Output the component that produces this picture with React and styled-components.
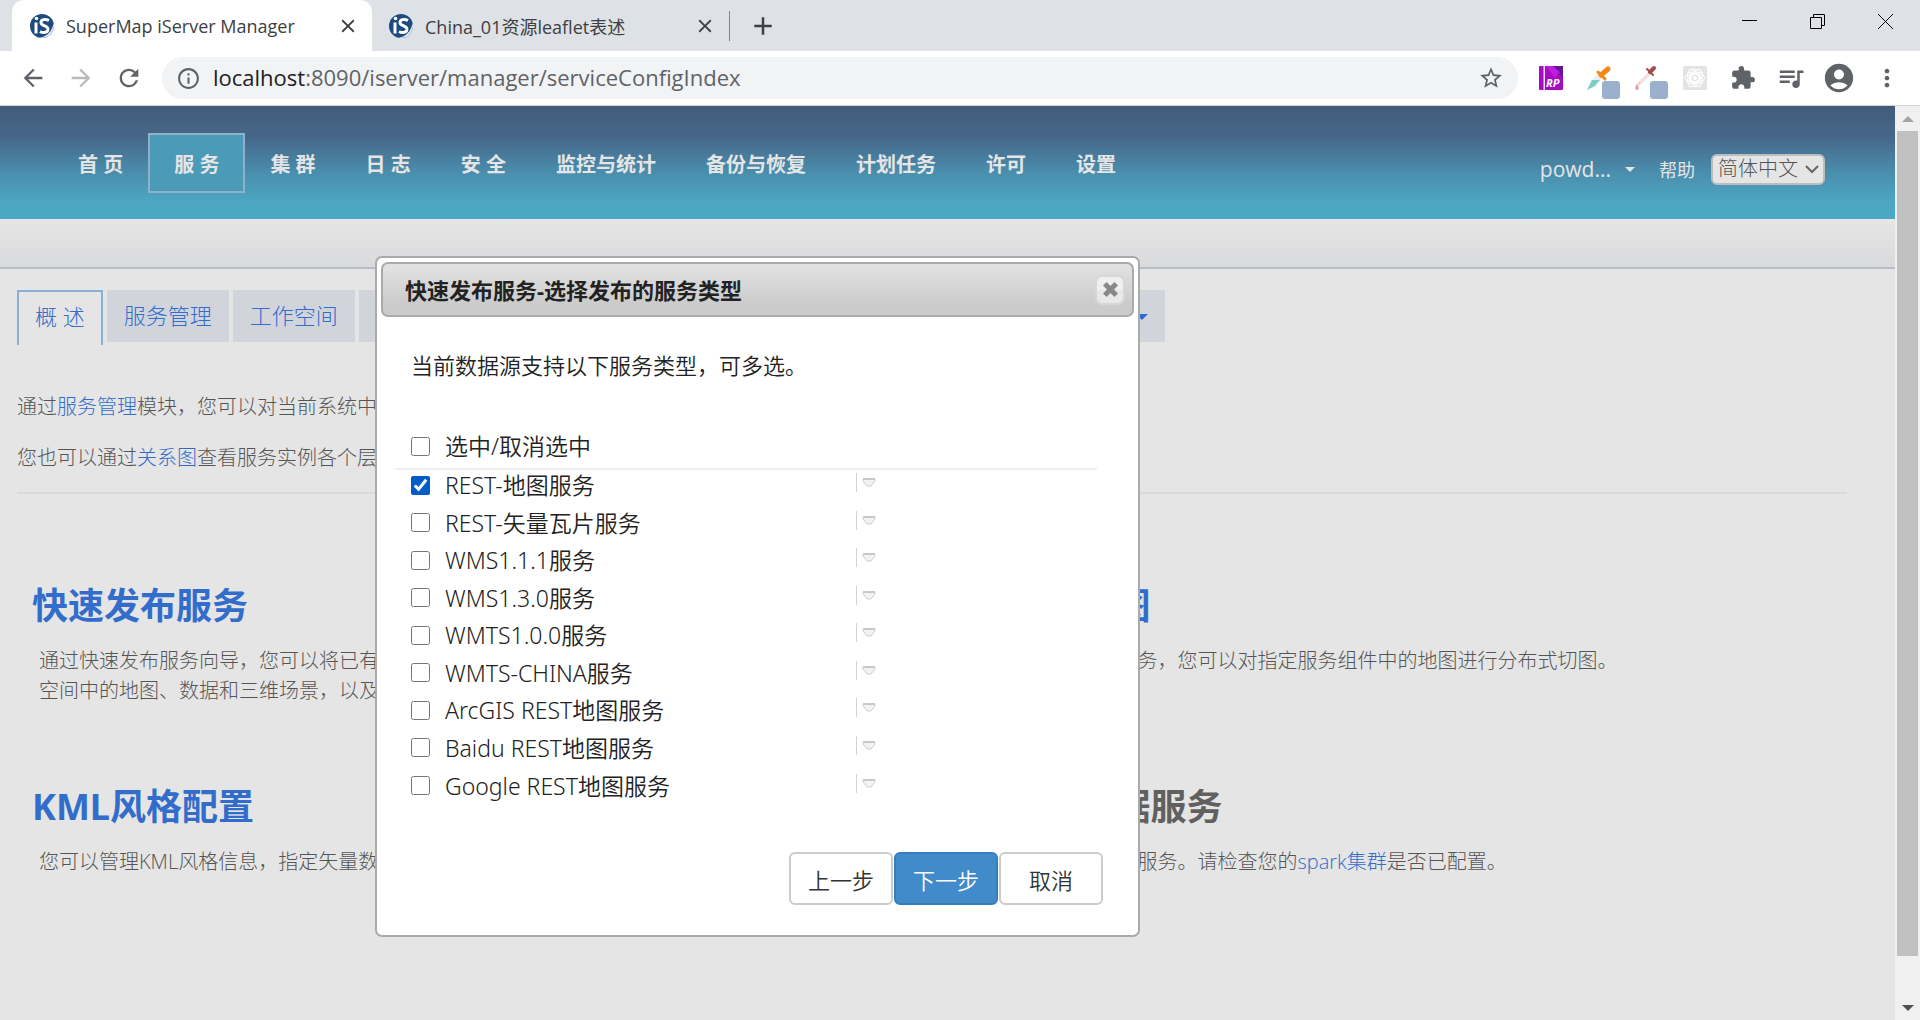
import React, { useState } from 'react';
import styled, { createGlobalStyle } from 'styled-components';
import {
  MdArrowBack, MdArrowForward, MdRefresh, MdInfoOutline, MdStarBorder,
  MdExtension, MdQueueMusic, MdAccountCircle, MdMoreVert, MdClose, MdAdd,
} from 'react-icons/md';

const GlobalStyle = createGlobalStyle`
  * { box-sizing: border-box; }
  body {
    margin: 0;
    font-family: "Open Sans", "Noto Sans CJK SC", sans-serif;
    font-size: 20px;
    color: #555;
    overflow: hidden;
  }
  button, select, input { font: inherit; }
  a { color: #326dcb; text-decoration: none; }
`;

const Window = styled.div`
  display: flex;
  flex-direction: column;
  height: 100vh;
`;

/* ---------- browser frame ---------- */

const TabStrip = styled.div`
  display: flex;
  align-items: center;
  height: 51px;
  flex: none;
  padding-left: 12px;
  background: #dee1e6;
`;

const BrowserTab = styled.div`
  display: flex;
  align-items: center;
  gap: 12px;
  height: 51px;
  width: ${p => (p.$active ? 360 : 357)}px;
  padding: 0 13px 0 ${p => (p.$active ? 18 : 17)}px;
  border-radius: 12px 12px 0 0;
  background: ${p => (p.$active ? '#fff' : 'transparent')};
  color: #3c4043;
  font-size: 18px;
  white-space: nowrap;
`;

const TabTitle = styled.span`
  flex: 1;
`;

const IconButton = styled.button`
  display: flex;
  align-items: center;
  justify-content: center;
  flex: none;
  padding: 0;
  border: 0;
  background: none;
  color: ${p => p.$color || '#5f6368'};
`;

const StripDivider = styled.span`
  width: 1px;
  height: 30px;
  background: #80868b;
  margin-right: 18px;
`;

const WindowControls = styled.div`
  display: flex;
  gap: 53px;
  margin: 0 27px 8px auto;
`;

const Toolbar = styled.div`
  display: flex;
  align-items: center;
  height: 55px;
  flex: none;
  padding: 0 9px 0 19px;
  background: #fff;
  border-bottom: 1px solid #cfd4d8;
`;

const ToolGroup = styled.div`
  display: flex;
  align-items: center;
  gap: 20px;
`;

const AddressBar = styled.div`
  display: flex;
  align-items: center;
  flex: 1;
  height: 42px;
  margin: 0 9px 0 19px;
  padding: 0 14px;
  border-radius: 21px;
  background: #f1f3f4;
  color: #5f6368;
  font-size: 22px;
`;

const Url = styled.span`
  flex: 1;
  margin: 0 0 2px 12px;
  b { font-weight: 400; color: #202124; }
`;

const Extensions = styled.div`
  display: grid;
  grid-auto-flow: column;
  grid-auto-columns: 48px;
  justify-items: center;
  align-items: center;
`;

/* ---------- page ---------- */

const Viewport = styled.div`
  display: flex;
  flex: 1;
  min-height: 0;
`;

const Page = styled.div`
  flex: 1;
  min-width: 0;
  background: #e5e5e5;
  font-weight: 300;
`;

const Header = styled.header`
  display: flex;
  align-items: center;
  height: 113px;
  padding: 0 70px 0 53px;
  background: linear-gradient(#425b7a 0%, #46678a 28%, #4a8fae 60%, #4ca6c2 85%, #4ca9c5 100%);
`;

const Nav = styled.nav`
  display: flex;
  align-items: center;
  flex: 1;
`;

const NavLink = styled.a`
  padding: ${p => (p.$active ? '4px 24px 0' : '4px 25px 0')};
  line-height: 52px;
  border: ${p => (p.$active ? '2px solid #8fb0c6' : '0')};
  background: ${p => (p.$active ? '#4a9ab8' : 'none')};
  color: #e5e5e5;
  font-weight: 700;
  white-space: nowrap;
`;

const UserArea = styled.div`
  display: flex;
  align-items: center;
  padding-top: 13px;
  color: #e5e5e5;
  font-weight: 400;
`;

const UserMenu = styled.button`
  display: flex;
  align-items: center;
  gap: 14px;
  padding: 0;
  border: 0;
  background: none;
  color: #e5e5e5;
  font-size: 21px;
  line-height: 30px;
`;

const HelpLink = styled.a`
  margin: 0 16px 0 24px;
  color: #e5e5e5;
  font-size: 18px;
`;

const LanguageBox = styled.label`
  position: relative;
  display: flex;
  width: 114px;
  font-weight: 300;
  svg {
    position: absolute;
    right: 6px;
    top: 10px;
    pointer-events: none;
  }
`;

const Language = styled.select`
  appearance: none;
  width: 100%;
  height: 31px;
  padding: 0 5px;
  border: 2px solid #bdbdbd;
  border-radius: 6px;
  background: #e5e5e5;
  color: #555;
  line-height: 26px;
`;

const SubHeader = styled.div`
  height: 50px;
  background: linear-gradient(#e6e6e6, #d9dadc);
  border-bottom: 2px solid #b6bdca;
`;

const Tabs = styled.div`
  display: flex;
  align-items: flex-start;
  gap: 4px;
  padding: 21px 17px 0;
`;

const Tab = styled.a`
  display: flex;
  align-items: center;
  gap: 4px;
  height: ${p => (p.$active ? 55 : 52)}px;
  padding: ${p => (p.$active ? '0 16px 7px' : '0 17px 4px')};
  border: solid #87b1d6;
  border-width: ${p => (p.$active ? '2px 2px 0' : '0')};
  background: ${p => (p.$active ? 'none' : '#d1d5db')};
  font-size: 22px;
  white-space: nowrap;
`;

const Caret = styled.span`
  margin-top: ${p => p.$drop || 0}px;
  border: ${p => p.$size}px solid transparent;
  border-top-color: currentColor;
  border-bottom-width: 0;
`;

const Intro = styled.section`
  margin: 36px 48px 0 17px;
  padding-bottom: 9px;
  border-bottom: 2px solid #d9d9d9;
  p {
    margin: 0;
    line-height: 51px;
    white-space: nowrap;
  }
`;

const Features = styled.section`
  display: grid;
  grid-template-columns: 1fr 1fr;
  column-gap: 14px;
  padding: 85px 0 0 32px;
`;

const Feature = styled.article`
  min-height: 201px;
`;

const FeatureTitle = styled.h2`
  margin: 0;
  color: ${p => (p.$disabled ? '#606060' : '#326dcb')};
  font-family: "Noto Sans", "Noto Sans CJK SC", sans-serif;
  font-size: 36px;
  line-height: 54px;
  white-space: nowrap;
`;

const FeatureText = styled.p`
  margin: 13px 0 0;
  padding-left: 7px;
  line-height: 30px;
  white-space: nowrap;
`;

const Scrollbar = styled.div`
  display: flex;
  flex-direction: column;
  align-items: center;
  width: 25px;
  background: #f0f0f0;
`;

const ScrollEnd = styled.span`
  display: flex;
  align-items: center;
  height: 25px;
`;

const Thumb = styled.span`
  width: 21px;
  flex: 1;
  margin-bottom: 39px;
  background: #c0c0c0;
`;

/* ---------- dialog ---------- */

const Dialog = styled.div`
  position: absolute;
  left: 375px;
  top: 256px;
  width: 765px;
  padding: 4px 4px 30px;
  border: 2px solid #aaa;
  border-radius: 7px;
  background: #fff;
  color: #222;
  font-family: "Noto Sans", "Noto Sans CJK SC", sans-serif;
  font-size: 22px;
  font-weight: 350;
`;

const TitleBar = styled.div`
  display: flex;
  align-items: center;
  justify-content: space-between;
  height: 55px;
  padding: 0 7px 0 22px;
  border: 2px solid #aaa;
  border-radius: 7px;
  background: linear-gradient(#e3e3e3, #ccc 75%, #cbcbcb);
`;

const DialogTitle = styled.h1`
  margin: 0;
  font-size: 22px;
  line-height: 32px;
`;

const CloseButton = styled(IconButton)`
  width: 30px;
  height: 30px;
  border: 2px solid #d6d6d6;
  border-radius: 7px;
  background: linear-gradient(#efefef 50%, #e8e8e8 50%);
`;

const Lead = styled.p`
  margin: 31px 0 0 30px;
  line-height: 34px;
`;

const SelectAll = styled.div`
  margin: 48px 37px 0 15px;
  padding-left: 15px;
  padding-bottom: 6px;
  border-bottom: 2px solid #eee;
`;

const ServiceList = styled.ul`
  display: flex;
  flex-direction: column;
  min-height: 338px;
  margin: 0 37px 0 15px;
  padding: 0 0 0 15px;
  list-style: none;
`;

const ServiceRow = styled.li`
  display: flex;
  align-items: flex-start;
  flex: 1;
  label { line-height: 30px; }
`;

const Option = styled.label`
  display: flex;
  align-items: center;
  width: 445px;
  font-size: 23px;
  line-height: 32px;
  white-space: nowrap;
`;

const Checkbox = styled.input`
  width: 19px;
  height: 19px;
  margin: 0 15px 0 0;
  accent-color: #005cc8;
`;

const Expand = styled.button`
  display: flex;
  align-items: center;
  height: 19px;
  margin-top: 3px;
  padding: 0 0 0 5px;
  border: 0;
  border-left: 1px solid #d3d3d3;
  background: none;
`;

const Actions = styled.div`
  display: flex;
  justify-content: flex-end;
  gap: 1px;
  margin: 44px 31px 0 0;
`;

const ActionButton = styled.button`
  width: 104px;
  height: 53px;
  border: 2px solid ${p => (p.$primary ? '#357ebd' : '#ccc')};
  border-radius: 6px;
  background: ${p => (p.$primary ? '#428bca' : '#fff')};
  color: ${p => (p.$primary ? '#fff' : '#333')};
`;

/* ---------- drawings ---------- */

const Favicon = () => (
  <svg width="24" height="24" viewBox="0 0 24 24">
    <circle cx="12" cy="12" r="12" fill="#1d4a80" />
    <path d="M24 12a12 12 0 0 1-14 11.8C17 22 22 18 23.500 9z" fill="#dfe7f0" />
    <circle cx="6.500" cy="4.500" r="1.800" fill="#fff" />
    <path d="M6 8.500v11" stroke="#fff" strokeWidth="3" />
    <path d="M19 6.500c-4-2-8-1-8 2 0 4 7.500 3 7 7-.5 3-4.500 4-8 2" fill="none" stroke="#fff" strokeWidth="3" />
    <path d="M19 10c1 1 2 3 1 6" fill="none" stroke="#1d4a80" strokeWidth="1" />
  </svg>
);

const RpIcon = () => (
  <svg width="24" height="24" viewBox="0 0 24 24">
    <rect width="24" height="24" rx="1" fill="#a80bc4" />
    <path d="M7 0h17v12z" fill="#7a13a8" />
    <path d="M7 0l9 12L24 2V0z" fill="#c41be0" />
    <path d="M14 0h10v9z" fill="#5f1697" />
    <rect x="4.500" width="1.500" height="24" fill="#f3d6f8" />
    <text x="7" y="21" fontSize="11" fontWeight="700" fontStyle="italic" fill="#fff">RP</text>
  </svg>
);

const Dropper = ({ cap, body, tip, thin }) => (
  <svg width="42" height="42" viewBox="0 0 42 42">
    {thin ? (
      <g transform="translate(6 3)">
        <path d="M18 13L7 24" stroke={body} strokeWidth="3" strokeLinecap="round" />
        <path d="M18 13L8 23" stroke="#fff" strokeWidth="1" />
        <path d="M18 12l4-4" stroke={cap} strokeWidth="4" strokeLinecap="round" />
        <path d="M15 9l6 6" stroke={cap} strokeWidth="2" strokeLinecap="round" />
        <path d="M5 24c-2.500 3.500-2 6 0 6s2.500-2.500 0-6z" fill={tip} />
      </g>
    ) : (
      <g transform="translate(6 3)">
        <path d="M15 13L7 21l-4 9 8-4 8-9z" fill={body} />
        <path d="M8 20l-5 10 8-4 5-6z" fill={tip} />
        <path d="M17 15l7-6" stroke={cap} strokeWidth="5" strokeLinecap="round" />
        <path d="M14 12l7 7" stroke={cap} strokeWidth="3" strokeLinecap="round" />
      </g>
    )}
    <rect x="24" y="24" width="18" height="18" rx="3" fill="#9bb0cd" />
  </svg>
);

const ReactBadge = () => (
  <svg width="24" height="24" viewBox="0 0 24 24">
    <rect width="24" height="24" rx="2" fill="#e3e3e3" />
    <g fill="none" stroke="#fff" strokeWidth="1">
      {[0, 60, 120].map(a => (
        <ellipse key={a} cx="12" cy="12" rx="10" ry="4" transform={`rotate(${a} 12 12)`} />
      ))}
      {[30, 90, 150].map(a => (
        <ellipse key={a} cx="12" cy="12" rx="9" ry="4" transform={`rotate(${a} 12 12)`} />
      ))}
    </g>
    <circle cx="12" cy="12" r="2" fill="#fff" />
  </svg>
);

const Glyph = ({ d, size = 15, color = '#000', width = 1 }) => (
  <svg width={size} height={size} viewBox="0 0 15 15">
    <path d={d} fill="none" stroke={color} strokeWidth={width} />
  </svg>
);

const ScrollArrow = ({ up }) => (
  <svg width="12" height="6" viewBox="0 0 12 6">
    <path d={up ? 'M0 6L6 0l6 6z' : 'M0 0l6 6 6-6z'} fill={up ? '#a3a3a3' : '#505050'} />
  </svg>
);

const ExpandArrow = () => (
  <svg width="14" height="9" viewBox="0 0 14 9">
    <path d="M1 1h12v2L9 8H5L1 3z" fill="#f2f2f2" stroke="#d0d0d0" />
    <path d="M1 1h12" stroke="#c8c8c8" strokeWidth="2" />
  </svg>
);

/* ---------- data ---------- */

const navItems = ['首 页', '服 务', '集 群', '日 志', '安 全', '监控与统计', '备份与恢复', '计划任务', '许可', '设置'];
const tabItems = ['概 述', '服务管理', '工作空间', '服务接口', '服务组件', '数据源', '关系图', '元数据', '提供者', '更多操作'];
const services = [
  'REST-地图服务', 'REST-矢量瓦片服务', 'WMS1.1.1服务', 'WMS1.3.0服务', 'WMTS1.0.0服务',
  'WMTS-CHINA服务', 'ArcGIS REST地图服务', 'Baidu REST地图服务', 'Google REST地图服务',
];

export default function App() {
  const [checked, setChecked] = useState({ 0: true });
  const all = services.every((_, i) => checked[i]);
  const toggleAll = () => setChecked(all ? {} : Object.fromEntries(services.map((_, i) => [i, true])));

  return (
    <Window>
      <GlobalStyle />
      <TabStrip>
        <BrowserTab $active>
          <Favicon />
          <TabTitle>SuperMap iServer Manager</TabTitle>
          <IconButton aria-label="关闭标签页" $color="#3c4043"><MdClose size={22} /></IconButton>
        </BrowserTab>
        <BrowserTab>
          <Favicon />
          <TabTitle>China_01资源leaflet表述</TabTitle>
          <IconButton aria-label="关闭标签页" $color="#3c4043"><MdClose size={22} /></IconButton>
        </BrowserTab>
        <StripDivider />
        <IconButton aria-label="新标签页" $color="#3c4043"><MdAdd size={30} /></IconButton>
        <WindowControls>
          <IconButton aria-label="最小化"><Glyph d="M0 6.500h15" /></IconButton>
          <IconButton aria-label="还原"><Glyph d="M.5 3.500h11v11H.5zM3.500 3.500v-3h11v11h-3" /></IconButton>
          <IconButton aria-label="关闭"><Glyph d="M0 0l15 15M15 0L0 15" /></IconButton>
        </WindowControls>
      </TabStrip>
      <Toolbar>
        <ToolGroup>
          <IconButton aria-label="后退"><MdArrowBack size={28} /></IconButton>
          <IconButton aria-label="前进" $color="#bababa"><MdArrowForward size={28} /></IconButton>
          <IconButton aria-label="刷新"><MdRefresh size={28} /></IconButton>
        </ToolGroup>
        <AddressBar>
          <MdInfoOutline size={25} />
          <Url><b>localhost</b>:8090/iserver/manager/serviceConfigIndex</Url>
          <IconButton aria-label="收藏"><MdStarBorder size={26} /></IconButton>
        </AddressBar>
        <Extensions>
          <IconButton aria-label="RP"><RpIcon /></IconButton>
          <IconButton aria-label="取色器"><Dropper cap="#f28a12" body="#e8eef0" tip="#7ecdc8" /></IconButton>
          <IconButton aria-label="颜色选择"><Dropper thin cap="#a34a4a" body="#f0cfcf" tip="#dda0a0" /></IconButton>
          <IconButton aria-label="React"><ReactBadge /></IconButton>
          <IconButton aria-label="扩展程序"><MdExtension size={26} /></IconButton>
          <IconButton aria-label="媒体"><MdQueueMusic size={30} /></IconButton>
          <IconButton aria-label="用户"><MdAccountCircle size={34} /></IconButton>
          <IconButton aria-label="菜单"><MdMoreVert size={28} /></IconButton>
        </Extensions>
      </Toolbar>
      <Viewport>
        <Page>
          <Header>
            <Nav>
              {navItems.map((n, i) => <NavLink key={n} href="#" $active={i === 1}>{n}</NavLink>)}
            </Nav>
            <UserArea>
              <UserMenu>powd... <Caret $size={5} /></UserMenu>
              <HelpLink href="#">帮助</HelpLink>
              <LanguageBox>
                <Language aria-label="语言"><option>简体中文</option></Language>
                <svg width="14" height="10" viewBox="0 0 14 10">
                  <path d="M1 2l6 6 6-6" fill="none" stroke="#666" strokeWidth="2" />
                </svg>
              </LanguageBox>
            </UserArea>
          </Header>
          <SubHeader />
          <Tabs>
            {tabItems.map((t, i) => (
              <Tab key={t} href="#" $active={i === 0}>
                {t}
                {i === tabItems.length - 1 && <Caret $size={6} $drop={6} />}
              </Tab>
            ))}
          </Tabs>
          <Intro>
            <p>通过<a href="#">服务管理</a>模块，您可以对当前系统中的服务进行管理。</p>
            <p>您也可以通过<a href="#">关系图</a>查看服务实例各个层次之间的关系。</p>
          </Intro>
          <Features>
            <Feature>
              <FeatureTitle>快速发布服务</FeatureTitle>
              <FeatureText>
                通过快速发布服务向导，您可以将已有的数据快速发布为服务，包括工作<br />
                空间中的地图、数据和三维场景，以及其他来源的数据。
              </FeatureText>
            </Feature>
            <Feature>
              <FeatureTitle>分布式切图</FeatureTitle>
              <FeatureText>通过分布式切图服务，您可以对指定服务组件中的地图进行分布式切图。</FeatureText>
            </Feature>
            <Feature>
              <FeatureTitle>KML风格配置</FeatureTitle>
              <FeatureText>您可以管理KML风格信息，指定矢量数据的显示风格。</FeatureText>
            </Feature>
            <Feature>
              <FeatureTitle $disabled>分布式数据服务</FeatureTitle>
              <FeatureText>当前不能使用数据服务。请检查您的<a href="#">spark集群</a>是否已配置。</FeatureText>
            </Feature>
          </Features>
        </Page>
        <Scrollbar>
          <ScrollEnd><ScrollArrow up /></ScrollEnd>
          <Thumb />
          <ScrollEnd><ScrollArrow /></ScrollEnd>
        </Scrollbar>
      </Viewport>

      <Dialog role="dialog" aria-labelledby="dialog-title">
        <TitleBar>
          <DialogTitle id="dialog-title">快速发布服务-选择发布的服务类型</DialogTitle>
          <CloseButton aria-label="关闭对话框">
            <Glyph d="M3 3l9 9M12 3l-9 9" size={19} color="#888" width={4} />
          </CloseButton>
        </TitleBar>
        <Lead>当前数据源支持以下服务类型，可多选。</Lead>
        <SelectAll>
          <Option>
            <Checkbox type="checkbox" checked={all} onChange={toggleAll} />
            选中/取消选中
          </Option>
        </SelectAll>
        <ServiceList>
          {services.map((s, i) => (
            <ServiceRow key={s}>
              <Option>
                <Checkbox
                  type="checkbox"
                  checked={!!checked[i]}
                  onChange={() => setChecked({ ...checked, [i]: !checked[i] })}
                />
                {s}
              </Option>
              <Expand aria-label={`展开 ${s}`}><ExpandArrow /></Expand>
            </ServiceRow>
          ))}
        </ServiceList>
        <Actions>
          <ActionButton>上一步</ActionButton>
          <ActionButton $primary>下一步</ActionButton>
          <ActionButton>取消</ActionButton>
        </Actions>
      </Dialog>
    </Window>
  );
}
